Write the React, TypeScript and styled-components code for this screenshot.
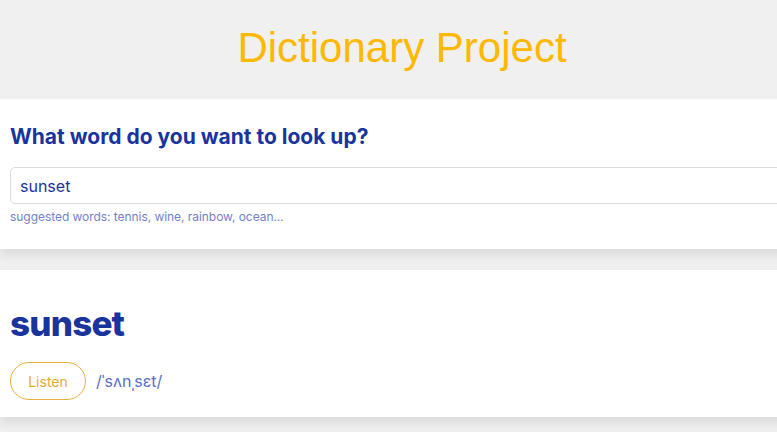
import React from "react";
import styled, { createGlobalStyle } from "styled-components";

const GlobalStyle = createGlobalStyle`
  html, body {
    margin: 0;
    padding: 0;
    background: #f0f0f0;
    overflow: hidden;
  }
  body {
    font-family: Inter, "Noto Sans", sans-serif;
  }
`;

const Page = styled.div`
  width: 804px;
  min-height: 432px;
  background: #f0f0f0;
  display: flex;
  flex-direction: column;
`;

const Header = styled.header`
  height: 99px;
  display: flex;
  align-items: flex-start;
  justify-content: center;
`;

const Title = styled.h1`
  margin: 0;
  padding-top: 24px;
  font-family: "Liberation Sans", Arial, sans-serif;
  font-size: 42px;
  line-height: 48px;
  font-weight: 400;
  color: #ffb800;
`;

const Card = styled.section<{ $pt: number; $pb: number }>`
  background: #ffffff;
  padding: ${(p) => p.$pt}px 10px ${(p) => p.$pb}px;
  box-shadow: 0 6px 10px rgba(0, 0, 0, 0.09);
  margin-bottom: 21px;
`;

const Question = styled.h2`
  margin: 0 0 18px;
  font-size: 21px;
  line-height: 24px;
  font-weight: 700;
  color: #1a349e;
`;

const SearchInput = styled.input`
  display: block;
  box-sizing: border-box;
  width: 100%;
  height: 37px;
  border: 1px solid #dcdcdc;
  border-radius: 5px;
  padding: 0 9px;
  font-family: Inter, sans-serif;
  font-size: 16px;
  color: #1a349e;
  outline: none;
`;

const Hint = styled.div`
  margin-top: 5px;
  font-size: 12px;
  line-height: 15px;
  color: #7282c9;
  letter-spacing: -0.05px;
`;

const Word = styled.h2`
  margin: 0 0 17px;
  font-size: 35px;
  line-height: 44px;
  font-weight: 800;
  color: #1a349e;
  letter-spacing: -0.8px;
`;

const PhoneticRow = styled.div`
  display: flex;
  align-items: center;
  gap: 10px;
`;

const ListenButton = styled.button`
  box-sizing: border-box;
  width: 76px;
  height: 38px;
  border: 1px solid #e8b03c;
  border-radius: 19px;
  background: #ffffff;
  color: #e8ab30;
  font-family: Inter, sans-serif;
  font-size: 14px;
  cursor: pointer;
`;

const Phonetic = styled.span`
  font-size: 16px;
  color: #5a6fc6;
`;

export default function App() {
  return (
    <Page>
      <GlobalStyle />
      <Header>
        <Title>Dictionary Project</Title>
      </Header>
      <Card $pt={26} $pb={25}>
        <Question>What word do you want to look up?</Question>
        <SearchInput defaultValue="sunset" />
        <Hint>suggested words: tennis, wine, rainbow, ocean...</Hint>
      </Card>
      <Card $pt={31} $pb={17}>
        <Word>sunset</Word>
        <PhoneticRow>
          <ListenButton>Listen</ListenButton>
          <Phonetic>/ˈsʌnˌsɛt/</Phonetic>
        </PhoneticRow>
      </Card>
    </Page>
  );
}
